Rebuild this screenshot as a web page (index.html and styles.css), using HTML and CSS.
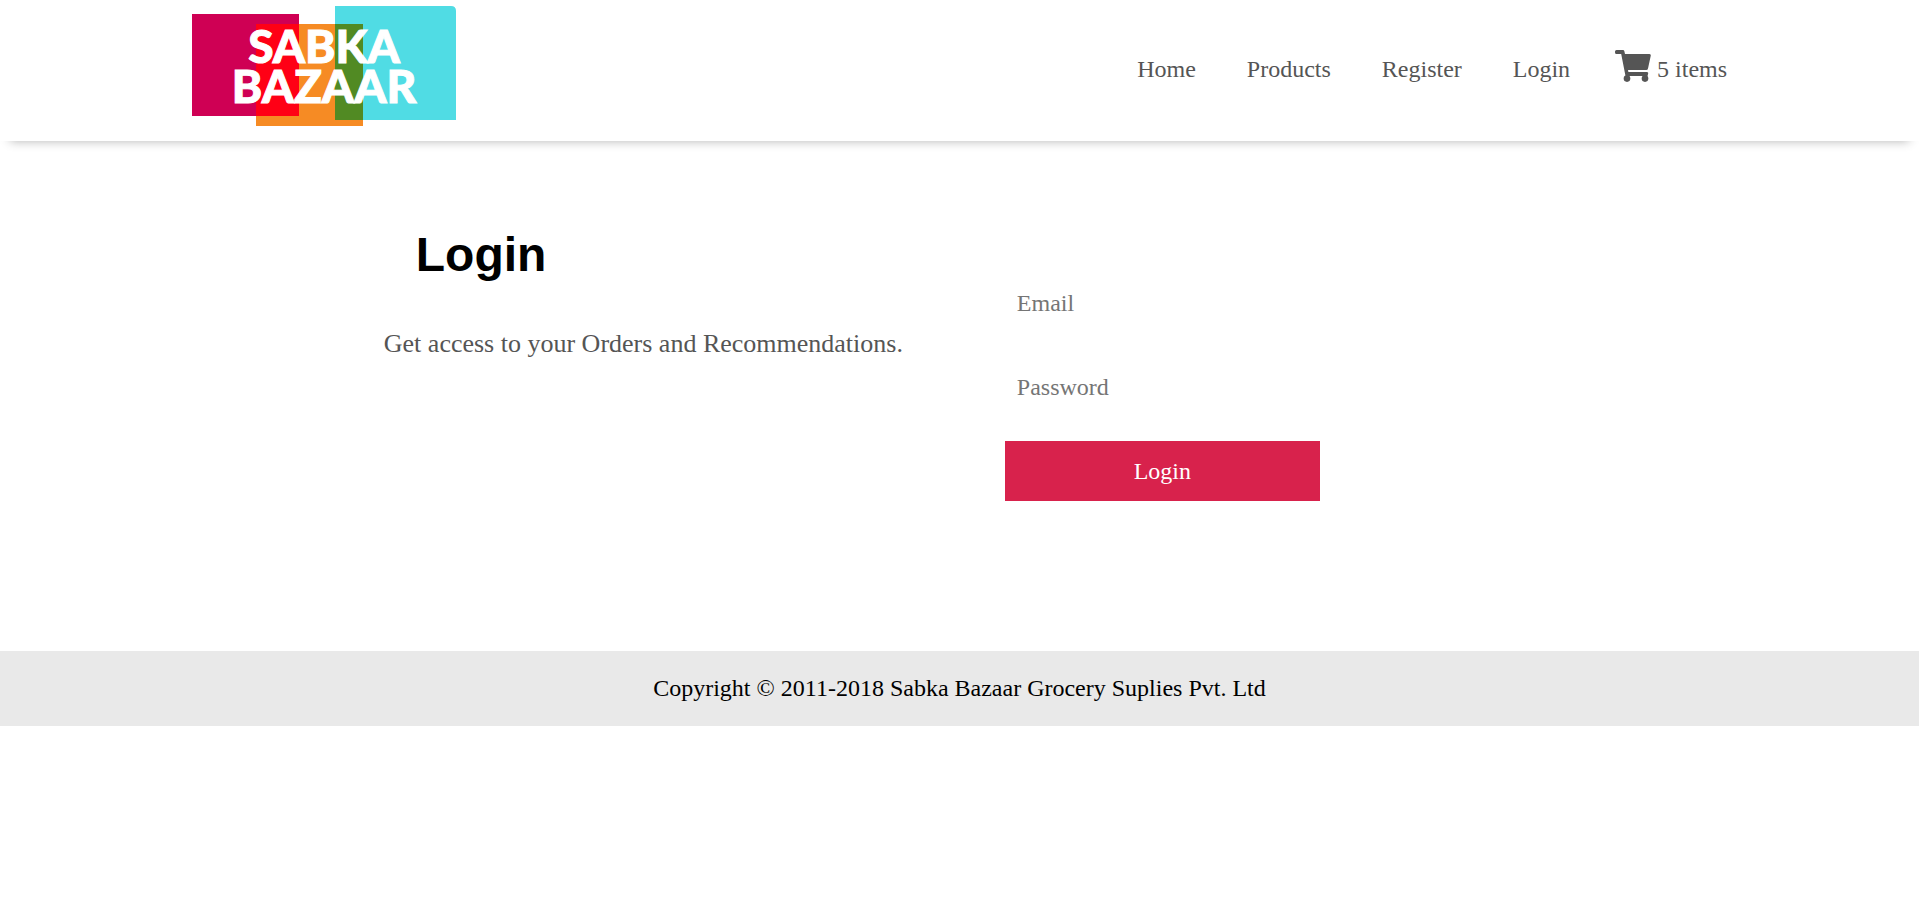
FILE: index.html
```html
<!DOCTYPE html>
<html lang="en">
<head>
<meta charset="utf-8">
<title>Sabka Bazaar</title>
<link rel="stylesheet" href="styles.css">
</head>
<body>
<header class="header">
  <a class="logo" href="#" aria-label="Sabka Bazaar">
    <svg width="264" height="120" viewBox="0 0 264 120">
      <path fill="#cf0054" d="M0 8h107v102H0z"/>
      <path fill="#f68b24" d="M64 18h107v102H64z"/>
      <path fill="#50dce4" d="M143 0h116q5 0 5 5v109H143z"/>
      <path fill="#ff0015" d="M64 18h43v92H64z"/>
      <path fill="#518a23" d="M143 18h28v96h-28z"/>
      <g class="logo-text" text-anchor="middle">
        <text x="132" y="57">SABKA</text>
        <text x="132" y="97">BAZAAR</text>
      </g>
    </svg>
  </a>
  <nav class="nav">
    <a href="#">Home</a>
    <a href="#">Products</a>
    <a href="#">Register</a>
    <a href="#">Login</a>
  </nav>
  <a class="cart" href="#">
    <svg width="36" height="32" viewBox="0 0 36 32" fill="currentColor" aria-hidden="true">
      <path d="M1.5 0H8q1 0 1.300 1L10 4h24.500q1.500 0 1.300 1.500L33 18.500Q32.700 20 31.200 20H13l.4 2h18.600q1.500 0 1.200 1.500L32.500 26H10.500L6.200 4H1.500Q0 4 0 2.500v-1Q0 0 1.500 0z"/>
      <circle cx="12" cy="28.600" r="3.300"/>
      <circle cx="30" cy="28.600" r="3.300"/>
    </svg>
    <span>5 items</span>
  </a>
</header>
<main class="login">
  <section class="intro">
    <h1>Login</h1>
    <p>Get access to your Orders and Recommendations.</p>
  </section>
  <form class="form">
    <input type="email" placeholder="Email" aria-label="Email">
    <input type="password" placeholder="Password" aria-label="Password">
    <button type="button">Login</button>
  </form>
</main>
<footer class="footer">Copyright © 2011-2018 Sabka Bazaar Grocery Suplies Pvt. Ltd</footer>
</body>
</html>
```
FILE: styles.css
```css
* {
  box-sizing: border-box;
}

body {
  margin: 0;
  background: #fff;
  font: 24px/27px "Liberation Serif", "Times New Roman", serif;
}

a {
  color: #555;
  text-decoration: none;
}

.header {
  display: flex;
  align-items: center;
  padding: 6px 10% 15px;
  box-shadow: 0 10px 10px -10px rgba(0, 0, 0, 0.3);
}

.logo {
  margin-right: auto;
}

.logo svg,
.cart svg {
  display: block;
}

.logo-text {
  fill: #fff;
  stroke: #fff;
  stroke-width: 1px;
  font: 900 46px Lato, sans-serif;
}

.nav {
  display: flex;
  gap: 51px;
  margin-right: 45px;
  padding-top: 6px;
}

.cart {
  display: flex;
  align-items: center;
  gap: 6px;
}

.cart span {
  padding-top: 6px;
}

.login {
  display: grid;
  grid-template-columns: 621px 315px;
  padding: 84px 20% 150px;
}

.intro h1 {
  margin: 0 0 45px 32px;
  font: bold 48px/60px "Liberation Sans", Arial, sans-serif;
}

.intro p {
  margin: 0;
  color: #555;
  font-size: 26px;
}

.form {
  display: grid;
  gap: 24px;
  padding-top: 48px;
}

.form input,
.form button {
  width: 100%;
  height: 60px;
  border: 0;
  font: inherit;
}

.form input {
  padding: 0 12px;
  background: none;
}

.form input::placeholder {
  color: #757575;
}

.form button {
  background: #d8224c;
  color: #fff;
}

.footer {
  padding: 24px;
  background: #e9e9e9;
  text-align: center;
}
```
